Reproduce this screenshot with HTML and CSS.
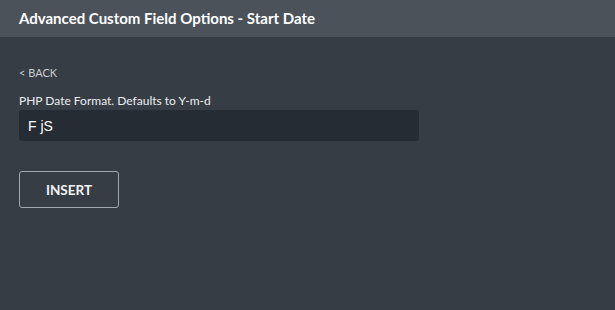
FILE: index.html
```html
<!DOCTYPE html>
<html>
<head>
<meta charset="utf-8">
<link rel="stylesheet" href="styles.css">
</head>
<body>
<div class="header">Advanced Custom Field Options - Start Date</div>
<div class="content">
  <a class="back">&lt; BACK</a>
  <label class="label">PHP Date Format. Defaults to Y-m-d</label>
  <input class="field" type="text" value="F jS">
  <button class="insert">INSERT</button>
</div>
</body>
</html>
```
FILE: styles.css
```css
html, body {
  margin: 0;
  padding: 0;
  background: #363d45;
  width: 615px;
  height: 310px;
  overflow: hidden;
  font-family: "Lato", "Liberation Sans", sans-serif;
}
.header {
  height: 37px;
  box-sizing: border-box;
  background: #4b525a;
  color: #ffffff;
  font-weight: 700;
  font-size: 15px;
  padding: 9px 0 0 19px;
  line-height: 18px;
}
.content {
  display: flex;
  flex-direction: column;
  align-items: flex-start;
  padding: 29px 19px 0 19px;
}
.back {
  color: #c9cdd1;
  font-size: 11px;
  line-height: 14px;
}
.label {
  margin-top: 14px;
  color: #eceef0;
  font-size: 12px;
  line-height: 14px;
}
.field {
  margin-top: 2px;
  width: 400px;
  height: 31px;
  box-sizing: border-box;
  background: #262c34;
  border: none;
  border-radius: 3px;
  color: #ffffff;
  font-family: "Liberation Sans", Arial, sans-serif;
  font-size: 14px;
  padding: 0 9px;
  outline: none;
}
.insert {
  margin-top: 30px;
  width: 100px;
  height: 37px;
  box-sizing: border-box;
  background: transparent;
  border: 1px solid #a3a8ad;
  border-radius: 3px;
  color: #f2f3f4;
  font-family: "Lato", "Liberation Sans", sans-serif;
  font-weight: 700;
  font-size: 13.5px;
  padding: 0;
}
```
